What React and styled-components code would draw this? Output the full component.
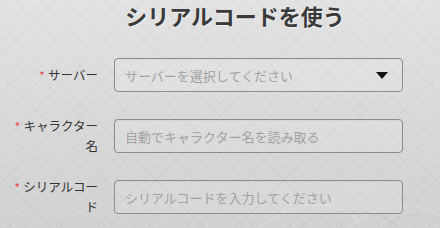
import React from 'react';
import styled, { createGlobalStyle } from 'styled-components';

const GlobalStyle = createGlobalStyle`
  html, body {
    margin: 0;
    padding: 0;
  }
  body {
    font-family: "Noto Sans CJK JP", "Noto Sans", sans-serif;
  }
`;

const fields = [
  { label: 'サーバー', placeholder: 'サーバーを選択してください', select: true },
  { label: 'キャラクター名', placeholder: '自動でキャラクター名を読み取る' },
  { label: 'シリアルコード', placeholder: 'シリアルコードを入力してください' },
];

const App = () => {
  return (
    <Page>
      <GlobalStyle />
      <Ornament viewBox="0 0 240 60" fill="none">
        <path d="M60 60 C 90 30, 140 30, 160 55" stroke="rgba(255,255,255,0.18)" strokeWidth="1.5" />
        <path d="M100 60 C 120 40, 170 35, 200 60" stroke="rgba(0,0,0,0.03)" strokeWidth="1.5" />
        <path d="M150 60 C 170 38, 215 30, 240 48" stroke="rgba(255,255,255,0.16)" strokeWidth="1.5" />
        <path d="M185 60 C 200 45, 225 42, 240 55" stroke="rgba(0,0,0,0.03)" strokeWidth="1.2" />
      </Ornament>
      <Title>シリアルコードを使う</Title>
      <Form>
        {fields.map((f) => (
          <React.Fragment key={f.label}>
            <Label>
              <Required>*</Required>
              {f.label}
            </Label>
            <Field>
              <Input placeholder={f.placeholder} readOnly={f.select} />
              {f.select && (
                <Arrow viewBox="0 0 12 7">
                  <path d="M0 0 H12 L6 7 Z" fill="#111" />
                </Arrow>
              )}
            </Field>
          </React.Fragment>
        ))}
      </Form>
    </Page>
  );
};
export default App;

const Page = styled.div`
  position: relative;
  width: 440px;
  height: 228px;
  overflow: hidden;
  box-sizing: border-box;
  padding-top: 1px;
  background-color: #dadada;
  background-image:
    repeating-linear-gradient(45deg, rgba(0, 0, 0, 0.025) 0 1px, transparent 1px 9px),
    repeating-linear-gradient(-45deg, rgba(0, 0, 0, 0.025) 0 1px, transparent 1px 9px),
    linear-gradient(180deg, #e3e3e3 0%, #d9d9d9 55%, #d2d2d2 100%);
`;

const Ornament = styled.svg`
  position: absolute;
  right: 0;
  bottom: 0;
  width: 240px;
  height: 60px;
  pointer-events: none;
`;

const Title = styled.h1`
  position: relative;
  margin: 0;
  padding-left: 30px;
  line-height: 28px;
  text-align: center;
  font-size: 22px;
  font-weight: bold;
  color: #3a3a3a;
  text-shadow: 1px 1px 1px rgba(255, 255, 255, 0.6);
`;

const Form = styled.div`
  position: relative;
  display: grid;
  grid-template-columns: 90px 289px;
  grid-auto-rows: 34px;
  column-gap: 16px;
  row-gap: 27px;
  align-items: center;
  padding: 29px 0 0 8px;
`;

const Label = styled.div`
  text-align: right;
  font-size: 12.5px;
  line-height: 20px;
  color: #333;
`;

const Required = styled.span`
  color: #e8322f;
  font-family: "Liberation Sans", sans-serif;
  font-size: 11px;
  margin-right: 4px;
  vertical-align: 1px;
`;

const Field = styled.div`
  position: relative;
  height: 34px;
`;

const Input = styled.input`
  box-sizing: border-box;
  width: 100%;
  height: 34px;
  padding: 0 10px;
  border: 1px solid #8d8d8d;
  border-radius: 4px;
  background: rgba(255, 255, 255, 0.12);
  box-shadow: inset 0 1px 1px rgba(0, 0, 0, 0.04);
  font-family: "Noto Sans CJK JP", "Noto Sans", sans-serif;
  font-size: 13px;
  color: #555;
  outline: none;

  &::placeholder {
    color: #a2a2a2;
  }
`;

const Arrow = styled.svg`
  position: absolute;
  right: 15px;
  top: 14px;
  width: 12px;
  height: 7px;
`;
